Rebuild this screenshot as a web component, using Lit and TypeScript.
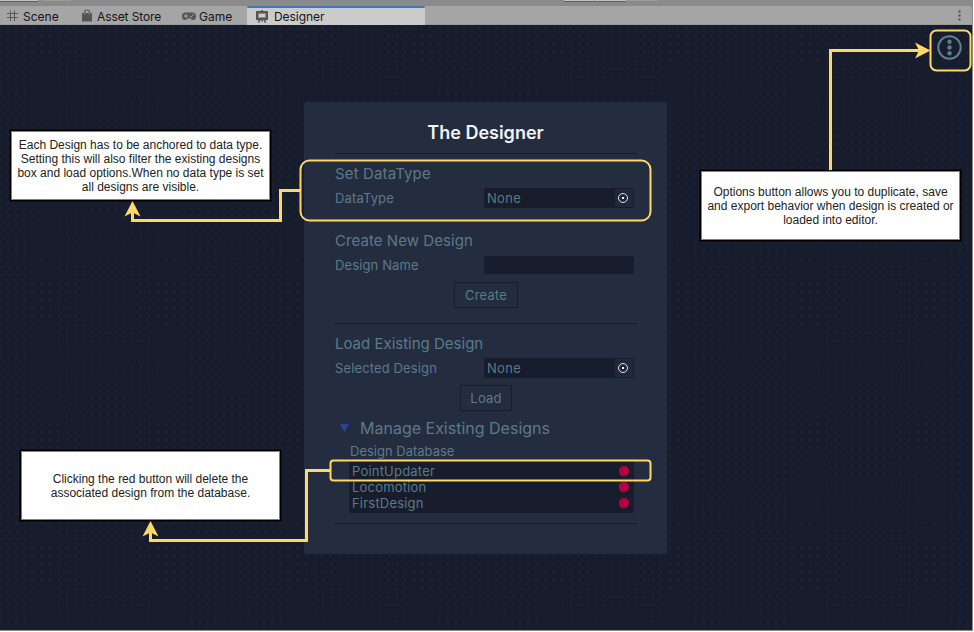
import { LitElement, html, css, svg } from "lit";
import { customElement, property } from "lit/decorators.js";

@customElement("editor-tabs")
class EditorTabs extends LitElement {
  static styles = css`
    :host { display: block; font: 12px/16px Inter, sans-serif; color: #151515; }
    .strip { height: 6px; background: #8a8a8a; display: flex; align-items: flex-start; }
    .stub { background: #c4c4c4; border-bottom: 1px solid #5f5f5f; box-sizing: border-box; height: 2px; }
    .stub.dim { background: #a2a2a2; border-bottom-color: #9a9a9a; height: 1px; }
    .s1 { width: 39px; border-radius: 0 0 3px 0; }
    .s2 { width: 29px; margin-left: 3px; }
    .s3 { width: 30px; margin-left: 493px; }
    .s4 { width: 31px; margin-left: 1px; }
    .s5 { width: 31px; margin-left: 1px; }
    .bar { height: 19px; box-sizing: border-box; background: #a5a5a5; display: flex; align-items: stretch; border-bottom: 1px solid #999; border-radius: 0 3px 0 0; }
    .tab { display: flex; align-items: center; box-sizing: border-box; white-space: nowrap; height: 19px; }
    .tab span { padding-top: 3px; }
    .tab svg { flex: none; display: block; }
    .scene { padding-left: 7px; width: 75px; gap: 5px; }
    .store { padding-left: 7px; width: 102px; gap: 5px; letter-spacing: -.1px; }
    .game { padding-left: 5px; width: 70px; gap: 3px; }
    .game svg { margin-top: 2px; }
    .active { width: 178px; padding: 0 0 0 9px; gap: 6px; background: #cbcbcb; border-top: 2px solid #3a79c4; border-radius: 2px 2px 0 0; letter-spacing: -.05px; }
    .active span { padding-top: 1px; }
    .active svg { margin-bottom: 1px; }
    .more { margin-left: auto; width: 30px; display: flex; align-items: center; justify-content: center; padding-left: 5px; box-sizing: border-box; }
  `;
  render() {
    return html`
      <div class="strip">
        <div class="stub s1"></div><div class="stub dim s2"></div>
        <div class="stub s3"></div><div class="stub s4"></div><div class="stub dim s5"></div>
      </div>
      <div class="bar">
        <div class="tab scene">
          <svg width="11" height="12" viewBox="0 0 11 12" stroke="#5a5a5a" fill="none"><path d="M3.500 0.500v10.500M7.500 0.500v10.500M0 3.500h11M0 7.500h11"/></svg>
          <span>Scene</span>
        </div>
        <div class="tab store">
          <svg width="10" height="13" viewBox="0 0 10 13"><path d="M2.600 5V2.700Q2.600 1 5 1T7.400 2.700V5" fill="none" stroke="#555" stroke-width="1.200"/><path d="M0 4h10v8.500H0z" fill="#555"/><path d="M2.500 4v1.500M7.500 4v1.500" stroke="#999"/></svg>
          <span>Asset Store</span>
        </div>
        <div class="tab game">
          <svg width="14" height="9" viewBox="0 0 14 9"><path d="M3.700 0.500H10.300A3.700 3.700 0 0 1 14 4.200Q14 8 11.200 8Q9.500 8 8.600 6.500H5.400Q4.500 8 2.800 8Q0 8 0 4.200A3.700 3.700 0 0 1 3.700 0.500Z" fill="#555"/><path d="M2 4h4M4 2v4" stroke="#b0b0b0"/><circle cx="9" cy="4.800" r=".8" fill="#b0b0b0"/><circle cx="11.200" cy="3" r=".8" fill="#b0b0b0"/></svg>
          <span>Game</span>
        </div>
        <div class="tab active">
          <svg width="12" height="13" viewBox="0 0 12 13" fill="none" stroke="#555"><path d="M6 0v2M3.800 9.500l-1.300 3M6 9.500v2M8.200 9.500l1.300 3" stroke-width="1.700"/><rect x="1" y="2" width="10" height="7" stroke-width="2"/><rect x="2.500" y="3.500" width="7" height="4" stroke="#8c8c8c"/></svg>
          <span>Designer</span>
        </div>
        <div class="more"><svg width="3" height="11" viewBox="0 0 3 11" fill="#4c4c4c"><path d="M.5 0.500h2v2h-2zM.5 4.500h2v2h-2zM.5 8.500h2v2h-2z"/></svg></div>
      </div>`;
  }
}

@customElement("object-field")
class ObjectField extends LitElement {
  @property() value = "";
  @property({ type: Boolean }) picker = false;
  static styles = css`
    :host { display: flex; width: 150px; height: 20px; box-sizing: border-box; background: #171d2c; border-radius: 2px; padding: 1px; font-size: 13px; line-height: 19px; letter-spacing: .3px; }
    :host(.plain) { height: 18px; }
    .value { flex: 1; padding-left: 2px; }
    .pick { width: 18px; background: #20283b; display: flex; align-items: center; padding-left: 3px; box-sizing: border-box; }
    svg { display: block; }
  `;
  render() {
    return html`<span class="value">${this.value}</span>
      ${this.picker
        ? html`<span class="pick"><svg width="10" height="10" viewBox="0 0 10 10"><circle cx="5" cy="5" r="4.500" fill="none" stroke="#dfe2e6"/><rect x="4" y="4" width="2" height="2" fill="#f0f2f4"/></svg></span>`
        : ""}`;
  }
}

@customElement("designer-panel")
class DesignerPanel extends LitElement {
  static styles = css`
    :host { display: flex; flex-direction: column; box-sizing: border-box; width: 363px; height: 452px; padding: 20px 30px 0; background: #242c40; border-radius: 3px; color: #5c7a88; font: 13px/20px Inter, sans-serif; letter-spacing: .13px; }
    .title { margin: 0; height: 31px; font-size: 18px; line-height: 22px; font-weight: 600; text-align: center; color: #f1f3f6; letter-spacing: 0; }
    .rule { height: 1px; background: #171d2c; flex: none; }
    h2 { margin: 0 0 0 1px; font-size: 15px; font-weight: 400; line-height: 20px; height: 20px; letter-spacing: .03px; }
    .first { margin-top: 10px; letter-spacing: .13px; }
    .second { margin-top: 23px; letter-spacing: .06px; }
    .third { margin-top: 10px; letter-spacing: 0; }
    .row { display: flex; justify-content: space-between; align-items: center; padding: 0 3px 0 1px; margin-top: 4px; height: 20px; }
    button { align-self: center; box-sizing: border-box; height: 26px; border: 1px solid #171d2c; background: none; color: inherit; font: inherit; letter-spacing: .2px; padding: 0; border-radius: 0; margin: 7px 0 0 1px; }
    .create { width: 64px; }
    .load { width: 52px; }
    .gap { margin-top: 15px; }
    .fold { display: flex; align-items: center; height: 20px; margin-top: 7px; padding-left: 6px; gap: 10px; }
    .fold h2 { font-size: 16px; margin: 0; letter-spacing: 0; }
    .sub { margin-left: 16px; margin-top: 4px; height: 18px; line-height: 19px; letter-spacing: 0; }
    .list { margin: 0 3px 0 15px; padding: 3px 4px 2px 3px; background: #171d2c; border-radius: 2px; letter-spacing: .2px; }
    .item { height: 16px; line-height: 16px; display: flex; align-items: center; justify-content: space-between; }
    .item svg { display: block; }
    .end { margin-top: 10px; }
  `;
  render() {
    return html`
      <h1 class="title">The Designer</h1>
      <div class="rule"></div>
      <h2 class="first">Set DataType</h2>
      <div class="row"><span>DataType</span><object-field value="None" picker></object-field></div>
      <h2 class="second">Create New Design</h2>
      <div class="row"><span>Design Name</span><object-field class="plain"></object-field></div>
      <button class="create">Create</button>
      <div class="rule gap"></div>
      <h2 class="third">Load Existing Design</h2>
      <div class="row"><span>Selected Design</span><object-field value="None" picker></object-field></div>
      <button class="load">Load</button>
      <div class="fold"><svg width="10" height="9" viewBox="0 0 10 9"><path d="M0 0h9L4.500 8.500z" fill="#2b4291"/></svg><h2>Manage Existing Designs</h2></div>
      <div class="sub">Design Database</div>
      <div class="list">
        ${["PointUpdater", "Locomotion", "FirstDesign"].map((n) => html`<div class="item"><span>${n}</span><svg width="11" height="12" viewBox="0 0 11 12"><circle cx="5" cy="6" r="5.200" fill="#b3003e"/></svg></div>`)}
      </div>
      <div class="rule end"></div>`;
  }
}

@customElement("app-root")
class AppRoot extends LitElement {
  static styles = css`
    :host { display: block; position: relative; width: 974px; height: 632px; background: #fff; overflow: hidden; }
    .window { width: 973px; height: 631px; box-sizing: border-box; background: #8a8a8a; padding: 0 1px 1px 0; display: flex; flex-direction: column; }
    .canvas { flex: 1; position: relative; background: #171d2c; display: flex; justify-content: center; align-items: flex-start; padding: 77px 1px 0 0; }
    .grid { position: absolute; inset: 0; width: 100%; height: 100%; }
    designer-panel { position: relative; }
    .options { position: absolute; top: 10px; left: 937px; width: 25px; height: 25px; }
    .links { position: absolute; inset: 0; }
    .note { position: absolute; box-sizing: border-box; width: 261px; height: 71px; border: 1px solid #000; background: #fff; box-shadow: inset 0 0 0 1px #808080, 0 0 0 1px rgba(0,0,0,.45); display: flex; flex-direction: column; align-items: center; justify-content: center; font: 12px/14px "Liberation Sans", sans-serif; color: #222; white-space: nowrap; padding: 1px 0 0 0; }
    .anchor { left: 10px; top: 130px; }
    .delete { left: 20px; top: 450px; }
    .export { left: 700px; top: 170px; }
  `;
  note(cls: string, lines: string[]) {
    return html`<div class="note ${cls}">${lines.map((l) => html`<span>${l}</span>`)}</div>`;
  }
  box(x: number, y: number, w: number, h: number, r: number) {
    return svg`<rect x=${x} y=${y} width=${w} height=${h} rx=${r} fill="none" stroke="#ffd966" stroke-width="2"/>`;
  }
  link(line: string, head: string) {
    return svg`<path d=${line} fill="none" stroke="#ffd966" stroke-width="3"/><path d=${head} fill="#ffd966"/>`;
  }
  render() {
    return html`
      <div class="window">
        <editor-tabs></editor-tabs>
        <div class="canvas">
          <svg class="grid">
            <defs><pattern id="dots" x="-.3" y="1.700" width="8.260" height="8.250" patternUnits="userSpaceOnUse"><circle cx="1" cy="1" r=".95" fill="#1f2635"/></pattern></defs>
            <rect width="100%" height="100%" fill="url(#dots)"/>
          </svg>
          <designer-panel></designer-panel>
          <svg class="options" viewBox="0 0 25 25" fill="#5f7f8e"><circle cx="12.500" cy="12.500" r="11.200" fill="none" stroke="#5f7f8e" stroke-width="2"/><circle cx="12.500" cy="6.800" r="2.200"/><circle cx="12.500" cy="12.500" r="2.200"/><circle cx="12.500" cy="18.200" r="2.200"/></svg>
        </div>
      </div>
      ${this.note("anchor", ["Each Design has to be anchored to data type.", "Setting this will also filter the existing designs", "box and load options.When no data type is set", "all designs are visible."])}
      ${this.note("delete", ["Clicking the red button will delete the", "associated design from the database."])}
      ${this.note("export", ["Options button allows you to duplicate, save", "and export behavior when design is created or", "loaded into editor."])}
      <svg class="links" width="974" height="632">
        ${this.box(300.5, 160.5, 350, 60, 9)}
        ${this.box(330.5, 460.5, 320, 20, 3)}
        ${this.box(930.5, 30.5, 40, 40, 6)}
        ${this.link("M300 190.500H280.500V220.500H132.500V211", "M132.500 201L140.500 216.500L132.500 212.500L124.500 216.500Z")}
        ${this.link("M330 470.500H306.500V540.500H150.500V531", "M150.500 521L158.500 536.500L150.500 532.500L142.500 536.500Z")}
        ${this.link("M830.500 170V50.500H920", "M930.500 50.500L915 58.500L919 50.500L915 42.500Z")}
      </svg>`;
  }
}
